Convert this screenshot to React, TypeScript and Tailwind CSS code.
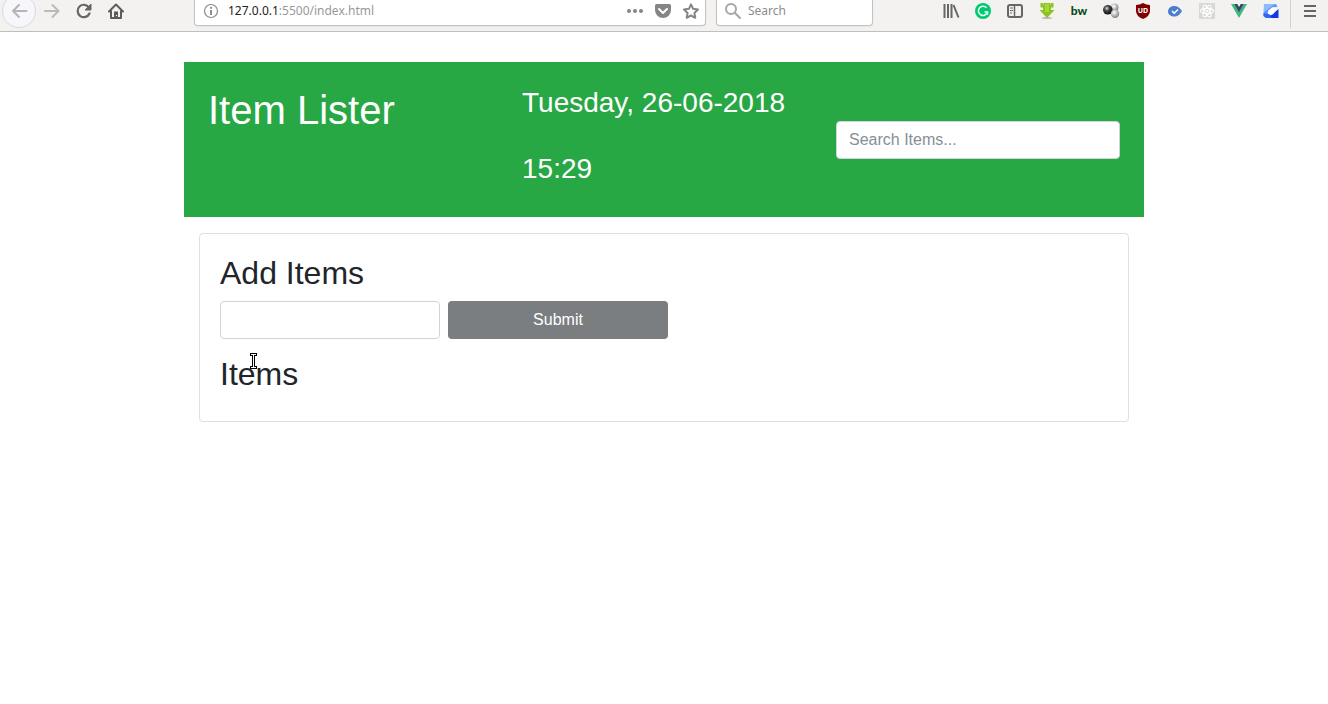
import type { ReactNode } from "react";

function ToolButton({ label, children }: { label: string; children: ReactNode }) {
  return (
    <button
      type="button"
      aria-label={label}
      className="flex h-[22px] w-8 shrink-0 items-center justify-center"
    >
      {children}
    </button>
  );
}

function Icon({ children }: { children: ReactNode }) {
  return (
    <svg width="16" height="16" viewBox="0 0 16 16" fill="none" className="overflow-visible">
      {children}
    </svg>
  );
}

function NavButtons() {
  return (
    <div className="flex">
      <ToolButton label="Back">
        <Icon>
          <circle cx="7" cy="8" r="16.5" fill="#f7f6fa" stroke="#dad9dc" />
          <path d="M14.5 8H1M7 2 1 8l6 6" stroke="#b5b5b5" strokeWidth="2" strokeLinecap="round" strokeLinejoin="round" />
        </Icon>
      </ToolButton>
      <ToolButton label="Forward">
        <Icon>
          <path d="M1 8h13.5M8.5 2l6 6-6 6" stroke="#bababa" strokeWidth="2" strokeLinecap="round" strokeLinejoin="round" />
        </Icon>
      </ToolButton>
      <ToolButton label="Reload">
        <Icon>
          <path d="M13 4.5A6.2 6.2 0 1 0 13.5 10.5" stroke="#666" strokeWidth="2.2" strokeLinecap="round" />
          <path d="M15 1v6H9z" fill="#666" stroke="#666" strokeLinejoin="round" />
        </Icon>
      </ToolButton>
      <ToolButton label="Home">
        <Icon>
          <path d="M1 8.5 8 1.5l7 7M3 8v7h10V8" stroke="#5c5c5c" strokeWidth="2" strokeLinecap="round" strokeLinejoin="round" />
          <path d="M6 8.5h4V15H6z" fill="#5c5c5c" />
          <path d="M8 12h1v1H8z" fill="#fff" />
        </Icon>
      </ToolButton>
    </div>
  );
}

function AddressBar() {
  return (
    <div className="flex h-[26px] flex-1 items-center rounded-b border border-t-0 border-[#c2c2c2] bg-white pb-[3px] shadow-xs">
      <span className="flex w-8 justify-center">
        <Icon>
          <circle cx="8" cy="8" r="6.5" stroke="#8a8a8a" strokeWidth="1.2" />
          <path d="M8 7v5M8 4v1.8" stroke="#808080" strokeWidth="1.8" />
        </Icon>
      </span>
      <a href="#" className="flex-1 pl-px text-[12px] leading-5 text-[#999]">
        <span className="text-[#222]">127.0.0.1</span>:5500/index.html
      </a>
      <div className="flex gap-3 pr-1.5">
        <button type="button" aria-label="Page actions">
          <Icon>
            <g fill="#858585">
              <circle cx="2" cy="8" r="2" />
              <circle cx="8" cy="8" r="2" />
              <circle cx="14" cy="8" r="2" />
            </g>
          </Icon>
        </button>
        <button type="button" aria-label="Save to Pocket">
          <Icon>
            <path d="M1.5 1h13Q16 1 16 2.500V7A8 8 0 0 1 0 7V2.500Q0 1 1.500 1z" fill="#858585" />
            <path d="m4 6 4 4 4-4" stroke="#fff" strokeWidth="2" strokeLinecap="round" strokeLinejoin="round" />
          </Icon>
        </button>
        <button type="button" aria-label="Bookmark">
          <Icon>
            <path d="m8 1.300 2.100 4.500 4.900.7-3.600 3.400.9 4.900L8 12.500l-4.300 2.300.9-4.900L1 6.500l4.900-.7z" stroke="#858585" strokeWidth="2" strokeLinejoin="round" />
          </Icon>
        </button>
      </div>
    </div>
  );
}

function SearchBar() {
  return (
    <label className="ml-2.5 flex h-[26px] w-[157px] items-center rounded-b border border-t-0 border-[#c2c2c2] bg-white pb-[3px] pl-2 shadow-xs">
      <Icon>
        <circle cx="6" cy="6" r="5" stroke="#a6a6a6" strokeWidth="2" />
        <path d="m10 10 5 5" stroke="#a6a6a6" strokeWidth="2" strokeLinecap="round" />
      </Icon>
      <input
        type="text"
        aria-label="Search"
        placeholder="Search"
        className="ml-[7px] w-full min-w-0 text-[12px] leading-5 outline-none placeholder:text-[#8c8c8c]"
      />
    </label>
  );
}

function Extensions() {
  return (
    <div className="ml-[62px] flex">
      <ToolButton label="Library">
        <Icon>
          <path d="M1.500 1v14M5 1v14M8.500 1v14" stroke="#666" strokeWidth="2" />
          <path d="m10.500 2 5 12.500" stroke="#666" strokeWidth="2" />
        </Icon>
      </ToolButton>
      <ToolButton label="Grammar check">
        <Icon>
          <circle cx="8" cy="8" r="8" fill="#00c871" />
          <path d="M11.500 4.800A4.600 4.600 0 1 0 12.500 9H9.500M12.500 9v3" stroke="#e8fff3" strokeWidth="1.500" />
        </Icon>
      </ToolButton>
      <ToolButton label="Sidebars">
        <Icon>
          <rect x="1" y="2" width="14" height="12" rx="2" stroke="#666" strokeWidth="2" />
          <path d="M7.500 2v12" stroke="#666" strokeWidth="1.500" />
          <path d="M3 5h3M3 7.500h3M3 10h2" stroke="#666" />
        </Icon>
      </ToolButton>
      <ToolButton label="Downloads">
        <Icon>
          <ellipse cx="8" cy="15" rx="5" ry="1" fill="#bbb" />
          <path d="M1.500 0h3v2H5V0h6v2h.5V0h3v4.500H12V7h3.500L8 15 .5 7H4V4.500H1.500z" fill="#8ec21f" />
          <path d="M6 1h4v8H6z" fill="#a5d63b" />
        </Icon>
      </ToolButton>
      <ToolButton label="bw">
        <span className="font-['Lato',sans-serif] text-[12px] leading-4 font-black text-[#0b4a12]">bw</span>
      </ToolButton>
      <ToolButton label="Molecules">
        <svg width="16" height="16" viewBox="0 0 16 16" className="overflow-visible">
          <defs>
            <radialGradient id="dark" cx=".4" cy=".35" r=".6">
              <stop offset="0" stopColor="#ddd" />
              <stop offset=".45" stopColor="#444" />
              <stop offset="1" stopColor="#111" />
            </radialGradient>
            <radialGradient id="light" cx=".4" cy=".35" r=".7">
              <stop offset="0" stopColor="#fff" />
              <stop offset="1" stopColor="#777" />
            </radialGradient>
          </defs>
          <circle cx="11.5" cy="4.5" r="4" fill="url(#light)" />
          <circle cx="4.8" cy="6.8" r="4.8" fill="url(#dark)" />
          <circle cx="12" cy="10.8" r="4.2" fill="url(#light)" />
        </svg>
      </ToolButton>
      <ToolButton label="Blocker">
        <Icon>
          <path d="M8 0q3.500 2 7 2v6q0 5-7 8-7-3-7-8V2q3.500 0 7-2z" fill="#800000" />
          <text x="8" y="10" textAnchor="middle" fill="#fff" className="text-[7px] font-bold">
            UD
          </text>
        </Icon>
      </ToolButton>
      <ToolButton label="Verified">
        <Icon>
          <path d="M1 8.500C1 5 4 3 7.500 3c3 0 5 1.500 7.500 5-2.500 4-4.500 5.500-7.500 5.500C4 13.500 1 12 1 8.500z" fill="#4a7fd0" />
          <path d="m5 8 2.200 2.200L11 6.500" stroke="#fff" strokeWidth="1.500" />
        </Icon>
      </ToolButton>
      <ToolButton label="React tools">
        <Icon>
          <rect width="16" height="16" fill="#d8d8d7" />
          <g stroke="#fff" strokeWidth="1.1">
            <ellipse cx="8" cy="8" rx="6.5" ry="2.6" />
            <ellipse cx="8" cy="8" rx="6.5" ry="2.6" transform="rotate(60 8 8)" />
            <ellipse cx="8" cy="8" rx="6.5" ry="2.6" transform="rotate(120 8 8)" />
          </g>
          <circle cx="8" cy="8" r="1.3" fill="#fff" />
        </Icon>
      </ToolButton>
      <ToolButton label="Vue tools">
        <Icon>
          <path d="M0 1h3.500L8 9l4.500-8H16L8 15z" fill="#41b883" />
          <path d="M3.300 1h3L8 4l1.700-3h3L8 9.500z" fill="#34495e" />
        </Icon>
      </ToolButton>
      <ToolButton label="Sync">
        <Icon>
          <path d="M1 1h12l1.500 3L9 4.500 5 8v3l4 2-1 2H3L.5 13z" fill="#5c96f8" />
          <path d="M1 1h11L1 9z" fill="#8dbafc" />
          <path d="M.5 10 9 12v3H3L.5 13z" fill="#2f66f2" />
          <path d="M15.500 6v9H9l-2-2 2-1 2-2z" fill="#1238e6" />
          <path d="M14 4.500H9.500L5.500 7.500V10L8 12.500v-2h3l.5-3z" fill="#fff" />
        </Icon>
      </ToolButton>
    </div>
  );
}

function Toolbar() {
  return (
    <header className="flex h-8 overflow-hidden border-b border-[#bfbfbf] bg-[#f3f2f1] pr-0.5 pl-1 font-['Noto_Sans',sans-serif]">
      <NavButtons />
      <div className="ml-[62px] flex flex-1">
        <AddressBar />
        <SearchBar />
      </div>
      <Extensions />
      <div className="ml-[3px] h-7 w-px bg-[#d2d1d0]" />
      <div className="ml-[3px]">
        <ToolButton label="Menu">
          <Icon>
            <path d="M2 3h12M2 8h12M2 13h12" stroke="#666" strokeWidth="2" />
          </Icon>
        </ToolButton>
      </div>
    </header>
  );
}

export default function App() {
  return (
    <div className="min-h-screen bg-white font-['Liberation_Sans',Arial,sans-serif] text-[#212529]">
      <Toolbar />
      <div className="mx-auto mt-[30px] max-w-[960px]">
        <div className="grid grid-cols-3 items-center gap-[30px] bg-[#28a745] p-6 text-white">
          <h1 className="self-start text-[40px] leading-[48px]">Item Lister</h1>
          <div className="flex flex-col gap-[33px] pb-2 text-[28px] leading-[33px] whitespace-nowrap">
            <p>Tuesday, 26-06-2018</p>
            <p>15:29</p>
          </div>
          <input
            type="text"
            aria-label="Search items"
            placeholder="Search Items..."
            className="h-[38px] w-full rounded border border-[#ced4da] bg-white px-3 text-base text-[#495057] placeholder:text-[#868e96]"
          />
        </div>

        <main className="relative mx-[15px] mt-4 rounded border border-[#dfdfdf] p-5">
          <h2 className="mb-[9px] text-[32px] leading-[38px]">Add Items</h2>
          <form className="mb-4 flex gap-2" onSubmit={(e) => e.preventDefault()}>
            <input
              type="text"
              aria-label="New item"
              className="h-[38px] w-[220px] rounded border border-[#ced4da] bg-white px-3 text-base"
            />
            <button type="submit" className="h-[38px] w-[220px] rounded bg-[#7b7e80] px-3 text-base text-white">
              Submit
            </button>
          </form>
          <h2 className="mb-2 text-[32px] leading-[38px]">Items</h2>

          {/* text cursor */}
          <svg width="7" height="16" viewBox="0 0 7 16" fill="none" className="absolute top-[119px] left-[50px]">
            <path d="M0 0h7v3H5v10h2v3H0v-3h2V3H0z" fill="#000" />
            <path d="M1 1.500h5M3.500 2v12M1 14.500h5" stroke="#fff" />
          </svg>
        </main>
      </div>
    </div>
  );
}
